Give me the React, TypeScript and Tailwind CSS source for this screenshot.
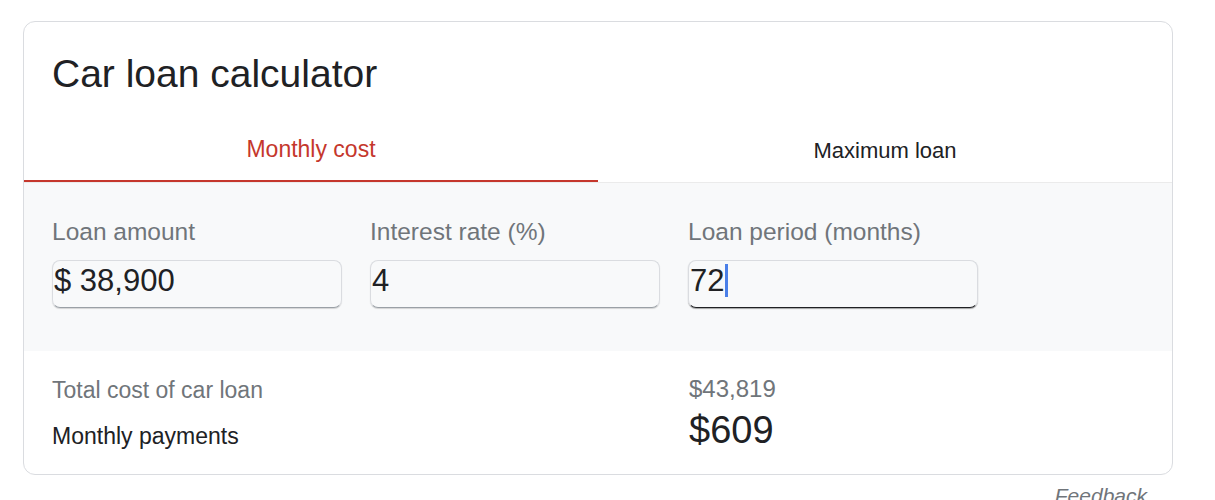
import React from 'react';

const fields = [
  { label: 'Loan amount', value: '$ 38,900', focused: false },
  { label: 'Interest rate (%)', value: '4', focused: false },
  { label: 'Loan period (months)', value: '72', focused: true },
];

const App = () => {
  return (
    <div className="w-[1215px] h-[500px] overflow-hidden bg-white pl-[23px] pt-[21px] font-['Liberation_Sans',Arial,sans-serif]">
      <div className="w-[1150px] h-[454px] rounded-[12px] border border-[#dadce0] overflow-hidden flex flex-col">
        <div className="h-[96px] px-[28px] pt-[30px]">
          <h1 className="text-[39px] leading-[44px] text-[#202124]">Car loan calculator</h1>
        </div>

        <div className="flex border-b border-[#ebebeb]">
          <div className="flex-1 h-[64px] flex items-center justify-center border-b-2 border-[#c5372c] -mb-px text-[23px] text-[#c5372c]">
            Monthly cost
          </div>
          <div className="flex-1 h-[64px] flex items-center justify-center text-[22px] text-[#202124]">
            Maximum loan
          </div>
        </div>

        <div className="bg-[#f8f9fa] h-[168px] px-[28px] pt-[35px] flex">
          {fields.map((f) => (
            <div key={f.label} className="w-[318px]">
              <div className="text-[24.5px] leading-[28px] text-[#70757a]">{f.label}</div>
              <div
                className={
                  'mt-[14px] w-[290px] h-[48px] rounded-[8px] border border-[#dadce0] flex items-center pb-[7px] ' +
                  (f.focused ? 'border-b-[#202124] shadow-[0_1px_1px_rgba(0,0,0,0.35)]' : 'border-b-[#9aa0a6] shadow-[0_1px_1px_rgba(0,0,0,0.15)]')
                }
              >
                <span className="text-[31px] leading-[34px] text-[#202124] pl-px">{f.value}</span>
                {f.focused && <span className="ml-[1px] w-[3px] h-[33px] bg-[#4a7fe8]" />}
              </div>
            </div>
          ))}
        </div>

        <div className="flex-1 px-[28px] flex">
          <div className="w-[637px] pt-[26px]">
            <div className="text-[23px] leading-[26px] text-[#70757a]">Total cost of car loan</div>
            <div className="mt-[20px] text-[23px] leading-[26px] text-[#202124]">Monthly payments</div>
          </div>
          <div className="pt-[24px]">
            <div className="text-[24px] leading-[28px] text-[#70757a]">$43,819</div>
            <div className="mt-[5px] text-[38px] leading-[44px] text-[#202124]">$609</div>
          </div>
        </div>
      </div>

      <div className="w-[1150px] flex justify-end pr-[26px] mt-[9px]">
        <span className="text-[21px] leading-[24px] italic text-[#70757a]">Feedback</span>
      </div>
    </div>
  );
};

export default App;
